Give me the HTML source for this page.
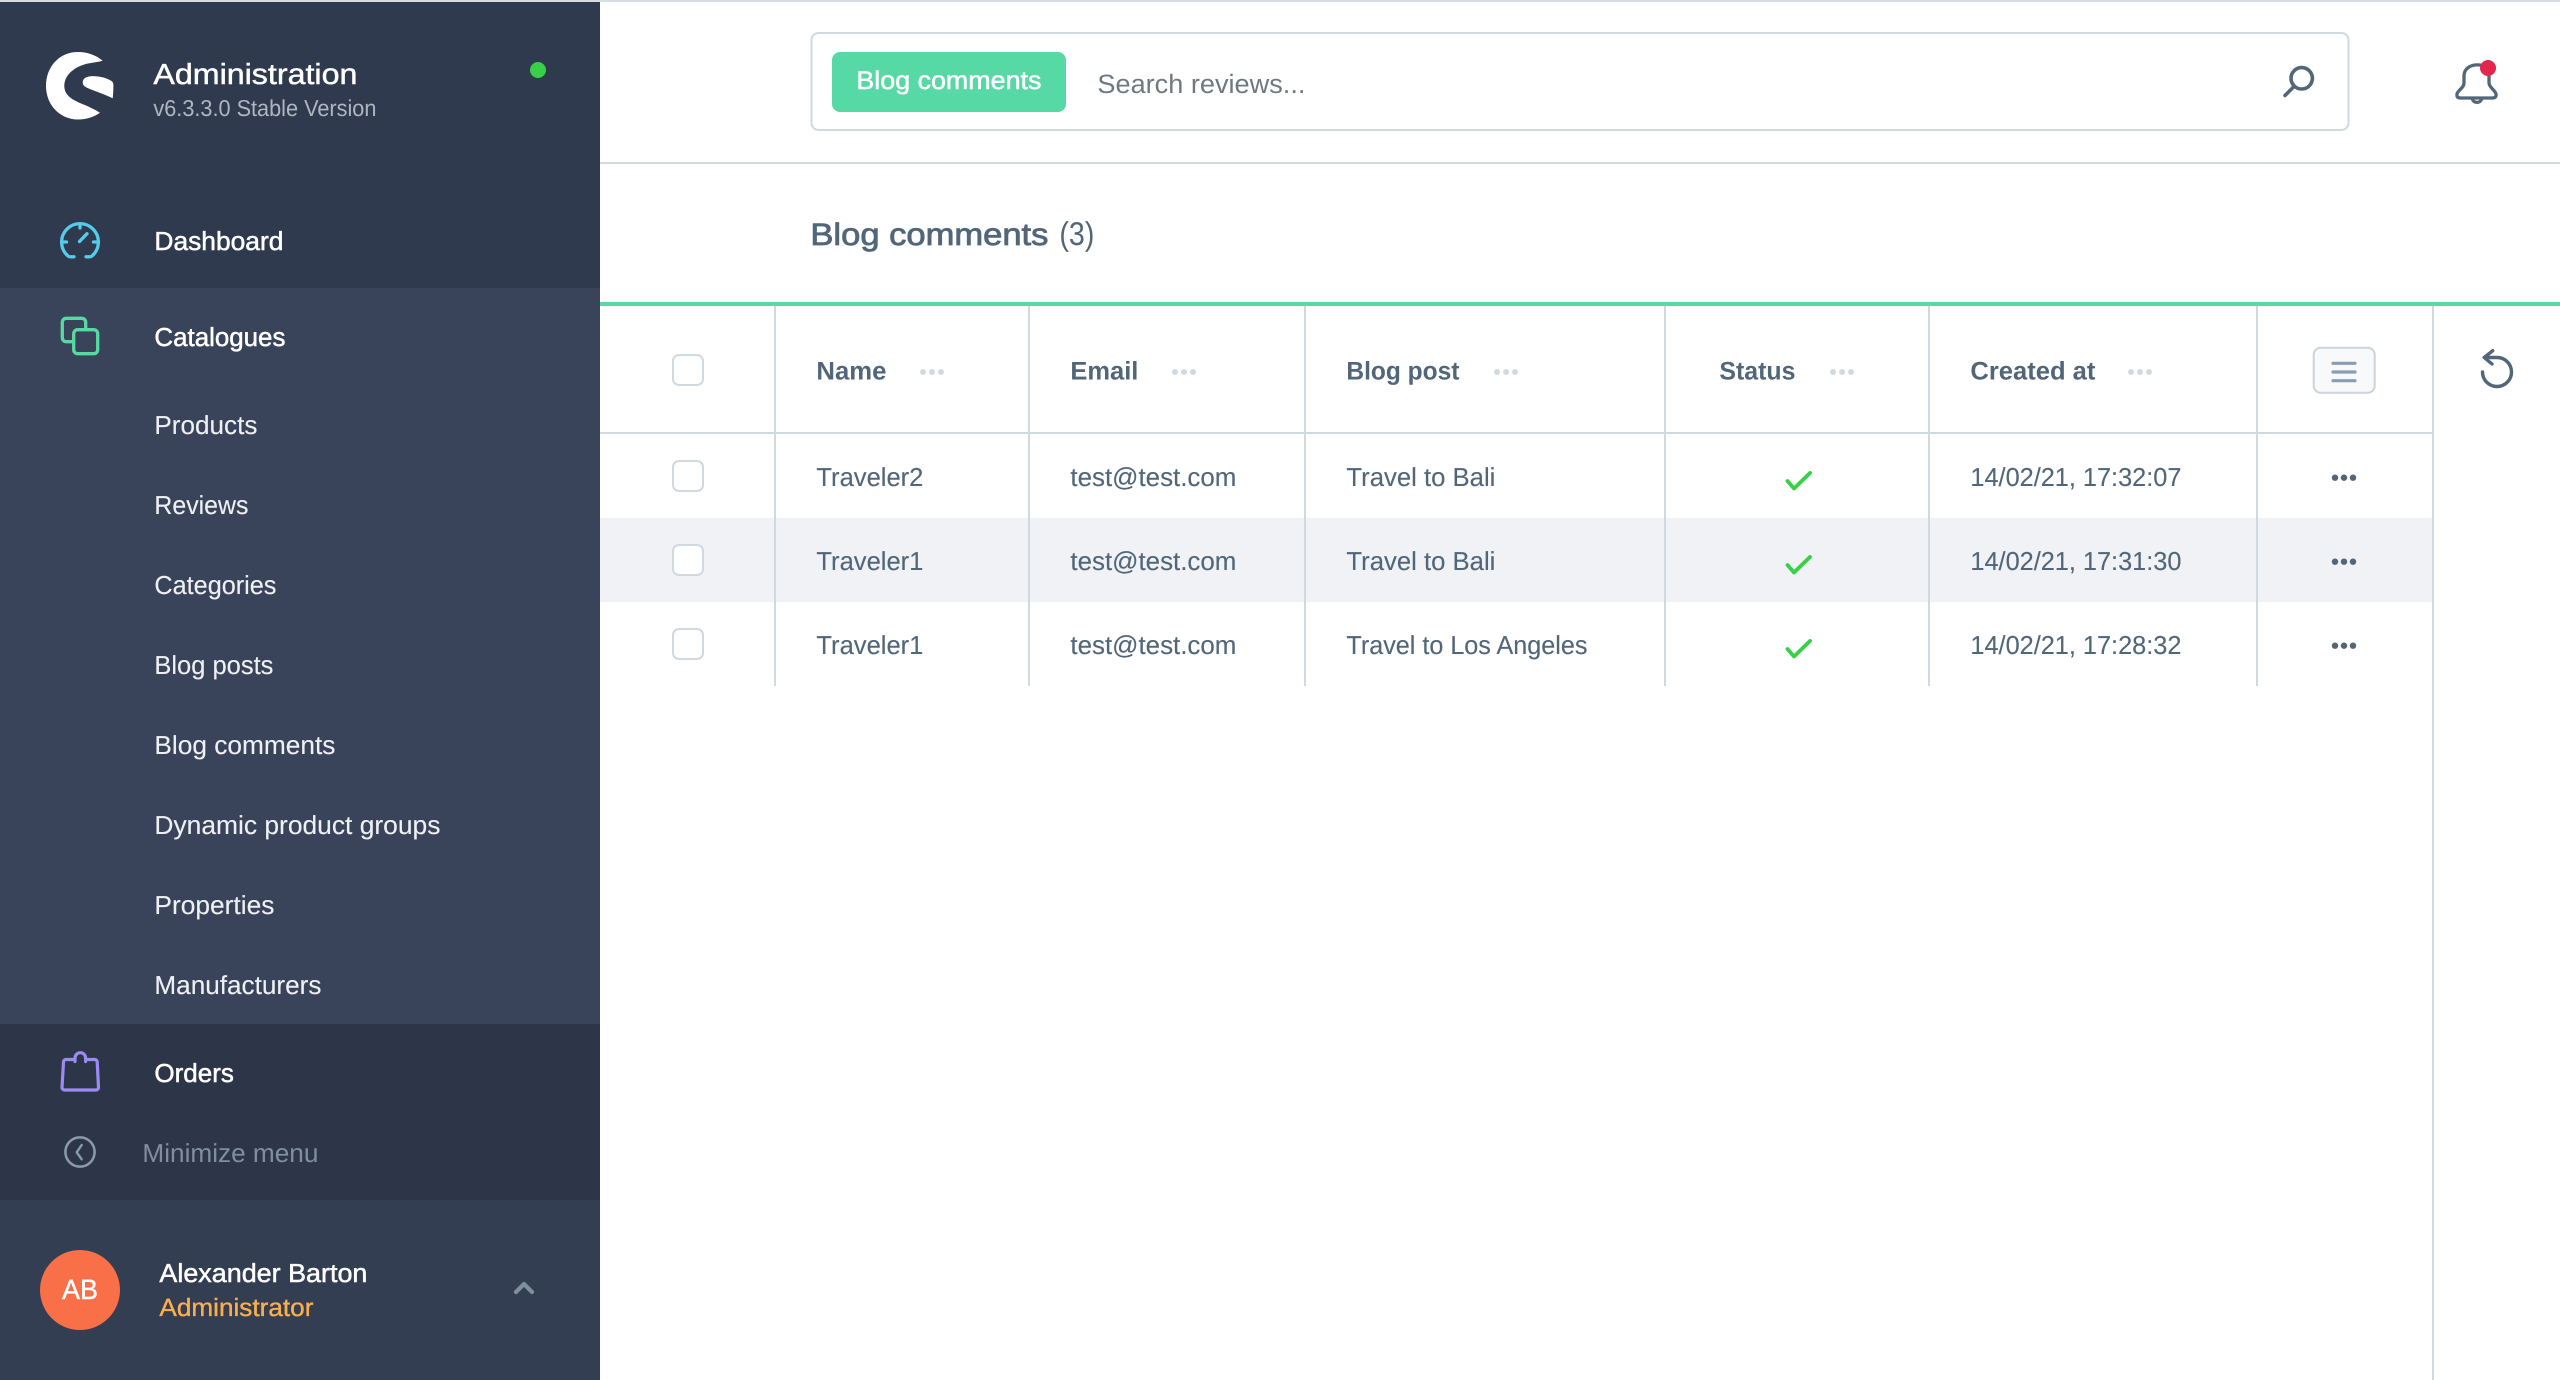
<!DOCTYPE html>
<html lang="en"><head><meta charset="utf-8"><title>Blog comments</title>
<style>
html,body{margin:0;padding:0;background:#fff;width:2560px;height:1380px;overflow:hidden}
svg{display:block}
text{font-family:"Liberation Sans",sans-serif;text-rendering:geometricPrecision;transform:translateX(-.6px)}
.m{font-size:26px;fill:#fff;stroke:#fff;stroke-width:.5px}
.s{font-size:26px;fill:#eef1f4;stroke:#eef1f4;stroke-width:.12px}
.c{font-size:26px;fill:#52667a;stroke:#52667a;stroke-width:.12px}
.h{font-size:25.5px;fill:#52667a;font-weight:bold}
.ln{fill:#d1d9e0}
.cb{fill:#fff;stroke:#d1d9e0;stroke-width:2}
.ck{fill:none;stroke:#37d046;stroke-width:3.8;stroke-linecap:round;stroke-linejoin:round}
.hd{fill:#d1d9e0}.rd{fill:#52667a}
</style></head>
<body>
<svg xmlns="http://www.w3.org/2000/svg" width="2560" height="1380" viewBox="0 0 2560 1380">
<rect width="2560" height="1380" fill="#fff"/>
<rect width="2560" height="2" fill="#d8dce1"/>

<!-- Sidebar -->
<rect y="2" width="600" height="286" fill="#2f3a4f"/>
<rect y="288" width="600" height="736" fill="#39435a"/>
<rect y="1024" width="600" height="176" fill="#2d3649"/>
<rect y="1200" width="600" height="180" fill="#333e52"/>

<!-- Logo -->
<path fill="#fff" d="M102.7 60.7C96 55 87 52 78 52C59 52 46 67 46 86C46 105 60 119.5 78 119.5C86 119.5 94 117 100 112.7C92 108 86 105.5 80 103C72 99.5 64.3 95 64.3 86C64.3 74 76 66 88 63.5C93 62.5 98 62 102.7 60.7Z"/>
<path fill="#fff" d="M82.7 82C83 78 87 76.5 91 76.2C98 75.8 106 77.5 111.5 81C113 82 113.5 84 113.4 86C113.3 90 113.2 94 112.7 98.3C106 95 98 92 91 89.5C86 87.5 82.5 86 82.7 82Z"/>
<text x="154" y="84" font-size="29" fill="#fff" stroke="#fff" stroke-width=".45" textLength="204" lengthAdjust="spacingAndGlyphs">Administration</text>
<text x="154" y="116" font-size="23" fill="#aeb6c0" textLength="223" lengthAdjust="spacingAndGlyphs">v6.3.3.0 Stable Version</text>
<circle cx="538" cy="70" r="8" fill="#37d046"/>

<!-- Dashboard icon -->
<g fill="none" stroke="#57cbe9" stroke-width="3.3" stroke-linecap="round" stroke-linejoin="round">
<path d="M74 256.8H70.5Q69 256.8 68 256A18.4 18.4 0 1 1 92 256Q91 256.8 89.5 256.8H86"/>
<path d="M80 224V228M62 242H66.5M98 242H93.5M79.5 241.5L87 233.7"/>
</g>
<text class="m" x="155" y="250" textLength="129" lengthAdjust="spacingAndGlyphs">Dashboard</text>

<!-- Catalogues icon -->
<g stroke="#57d9a3" stroke-width="3.3">
<rect x="62.3" y="318.3" width="23.4" height="23.4" rx="4" fill="none"/>
<rect x="73.7" y="329.7" width="24" height="24" rx="4" fill="#39435a"/>
</g>
<text class="m" x="155" y="346" textLength="131" lengthAdjust="spacingAndGlyphs">Catalogues</text>

<text class="s" x="155" y="434" textLength="103" lengthAdjust="spacingAndGlyphs">Products</text>
<text class="s" x="155" y="514" textLength="94" lengthAdjust="spacingAndGlyphs">Reviews</text>
<text class="s" x="155" y="594" textLength="122" lengthAdjust="spacingAndGlyphs">Categories</text>
<text class="s" x="155" y="674" textLength="119" lengthAdjust="spacingAndGlyphs">Blog posts</text>
<text class="s" x="155" y="754" textLength="181" lengthAdjust="spacingAndGlyphs">Blog comments</text>
<text class="s" x="155" y="834" textLength="286" lengthAdjust="spacingAndGlyphs">Dynamic product groups</text>
<text class="s" x="155" y="914" textLength="120" lengthAdjust="spacingAndGlyphs">Properties</text>
<text class="s" x="155" y="994" textLength="167" lengthAdjust="spacingAndGlyphs">Manufacturers</text>

<!-- Orders icon -->
<path fill="none" stroke="#9a8cf0" stroke-width="3.2" stroke-linecap="round" stroke-linejoin="round" d="M72.5 1059.5H66A2.5 2.5 0 0 0 63.5 1062L62 1087.5A2.5 2.5 0 0 0 64.5 1090H96A2.5 2.5 0 0 0 98.5 1087.5L97.2 1062A2.5 2.5 0 0 0 94.7 1059.5H88M75 1061.5V1058A5.3 5.3 0 0 1 85.6 1058V1061.5"/>
<text class="m" x="155" y="1082" textLength="79.5" lengthAdjust="spacingAndGlyphs">Orders</text>

<!-- Minimize -->
<circle cx="80" cy="1152" r="14.6" fill="none" stroke="#8a9ca8" stroke-width="2.5"/>
<path d="M81.7 1145L76.7 1152.3L81.7 1159.3" fill="none" stroke="#8a9ca8" stroke-width="2.4" stroke-linecap="round" stroke-linejoin="round"/>
<text x="143" y="1162" font-size="26" fill="#7f8f9f" textLength="176" lengthAdjust="spacingAndGlyphs">Minimize menu</text>

<!-- User -->
<circle cx="80" cy="1290" r="40" fill="#f96f47"/>
<text x="62.6" y="1299" font-size="28" fill="#fff" stroke="#fff" stroke-width=".4" textLength="36" lengthAdjust="spacingAndGlyphs">AB</text>
<text class="m" x="160" y="1282" textLength="208" lengthAdjust="spacingAndGlyphs">Alexander Barton</text>
<text x="160" y="1316" font-size="25" fill="#fcae4c" stroke="#fcae4c" stroke-width=".35" textLength="154" lengthAdjust="spacingAndGlyphs">Administrator</text>
<path d="M516 1292L524 1284L532 1292" fill="none" stroke="#7f8f9f" stroke-width="4.2" stroke-linecap="round" stroke-linejoin="round"/>

<!-- Top bar -->
<rect class="ln" x="600" y="162" width="1960" height="2"/>
<rect x="811.5" y="33" width="1537" height="97" rx="7" fill="#fff" stroke="#d1d9e0" stroke-width="2"/>
<rect x="832" y="52" width="234" height="60" rx="8" fill="#57d9a5"/>
<text x="857" y="89" font-size="25.5" fill="#fff" stroke="#fff" stroke-width=".5" textLength="185" lengthAdjust="spacingAndGlyphs">Blog comments</text>
<text x="1098" y="93" font-size="26.5" fill="#6f7880" textLength="208" lengthAdjust="spacingAndGlyphs">Search reviews...</text>
<g fill="none" stroke="#52667a" stroke-width="3.6" stroke-linecap="round">
<circle cx="2301.7" cy="78.3" r="10.7"/>
<path d="M2293.5 87L2285 95.5"/>
</g>
<!-- Bell -->
<g fill="none" stroke="#52667a" stroke-width="3.3" stroke-linecap="round" stroke-linejoin="round">
<path d="M2480 65C2470 64 2464 69 2464 76V83C2464 88 2458 90 2457 94C2456.5 97 2458 98 2461 98H2492C2495 98 2496.5 97 2496 94C2495 90 2489.5 88 2489 83V74"/>
<path d="M2472.5 99.5A4.7 4 0 0 0 2481.5 99.5"/>
</g>
<circle cx="2488" cy="68" r="8" fill="#e3264c"/>

<!-- Title -->
<text x="811" y="245" font-size="31" fill="#52667a" stroke="#52667a" stroke-width=".8" textLength="238" lengthAdjust="spacingAndGlyphs">Blog comments</text>
<text x="1060" y="245" font-size="33" fill="#52667a" textLength="35" lengthAdjust="spacingAndGlyphs">(3)</text>

<rect x="600" y="302" width="1960" height="4" fill="#57d9a3"/>

<!-- Table bg -->
<rect x="600" y="518" width="1833" height="84" fill="#f0f2f5"/>
<rect class="ln" x="600" y="432" width="1833" height="2"/>
<rect class="ln" x="774" y="306" width="2" height="380"/>
<rect class="ln" x="1028" y="306" width="2" height="380"/>
<rect class="ln" x="1304" y="306" width="2" height="380"/>
<rect class="ln" x="1664" y="306" width="2" height="380"/>
<rect class="ln" x="1928" y="306" width="2" height="380"/>
<rect class="ln" x="2256" y="306" width="2" height="380"/>
<rect class="ln" x="2432" y="306" width="2" height="1074"/>

<!-- Checkboxes -->
<rect class="cb" x="673" y="355" width="30" height="30" rx="6"/>
<rect class="cb" x="673" y="461" width="30" height="30" rx="6"/>
<rect class="cb" x="673" y="545" width="30" height="30" rx="6"/>
<rect class="cb" x="673" y="629" width="30" height="30" rx="6"/>

<!-- Header -->
<text class="h" x="817" y="379.5" textLength="70" lengthAdjust="spacingAndGlyphs">Name</text>
<text class="h" x="1071" y="379.5" textLength="68" lengthAdjust="spacingAndGlyphs">Email</text>
<text class="h" x="1347" y="379.5" textLength="113" lengthAdjust="spacingAndGlyphs">Blog post</text>
<text class="h" x="1720" y="379.5" textLength="76" lengthAdjust="spacingAndGlyphs">Status</text>
<text class="h" x="1971" y="379.5" textLength="125" lengthAdjust="spacingAndGlyphs">Created at</text>

<g class="hd">
<circle cx="923" cy="372" r="3"/><circle cx="932" cy="372" r="3"/><circle cx="941" cy="372" r="3"/>
<circle cx="1175" cy="372" r="3"/><circle cx="1184" cy="372" r="3"/><circle cx="1193" cy="372" r="3"/>
<circle cx="1497" cy="372" r="3"/><circle cx="1506" cy="372" r="3"/><circle cx="1515" cy="372" r="3"/>
<circle cx="1833" cy="372" r="3"/><circle cx="1842" cy="372" r="3"/><circle cx="1851" cy="372" r="3"/>
<circle cx="2131" cy="372" r="3"/><circle cx="2140" cy="372" r="3"/><circle cx="2149" cy="372" r="3"/>
</g>

<!-- Column settings button -->
<rect x="2313.7" y="347.7" width="61" height="45" rx="7" fill="#f7f9fa" stroke="#cbd3db" stroke-width="2"/>
<path d="M2333 363.3H2355M2333 372H2355M2333 380.7H2355" stroke="#8a9eb2" stroke-width="3.2" stroke-linecap="round" fill="none"/>

<!-- Reload -->
<g fill="none" stroke="#52667a" stroke-width="3.4" stroke-linecap="round" stroke-linejoin="round">
<path d="M2484.5 357.5H2497A14.5 14.5 0 1 1 2482.5 372"/>
<path d="M2492.7 350.7L2484.2 357.5L2492 364"/>
</g>

<!-- Row 1 -->
<text class="c" x="817" y="486" textLength="107" lengthAdjust="spacingAndGlyphs">Traveler2</text>
<text class="c" x="1071" y="486" textLength="166" lengthAdjust="spacingAndGlyphs">test@test.com</text>
<text class="c" x="1347" y="486" textLength="149" lengthAdjust="spacingAndGlyphs">Travel to Bali</text>
<path class="ck" d="M1787.5 481L1794 488.5L1810 473"/>
<text class="c" x="1971" y="486" textLength="211" lengthAdjust="spacingAndGlyphs">14/02/21, 17:32:07</text>
<g class="rd"><circle cx="2335" cy="477.7" r="3.2"/><circle cx="2344" cy="477.7" r="3.2"/><circle cx="2353" cy="477.7" r="3.2"/></g>

<!-- Row 2 -->
<text class="c" x="817" y="570" textLength="107" lengthAdjust="spacingAndGlyphs">Traveler1</text>
<text class="c" x="1071" y="570" textLength="166" lengthAdjust="spacingAndGlyphs">test@test.com</text>
<text class="c" x="1347" y="570" textLength="149" lengthAdjust="spacingAndGlyphs">Travel to Bali</text>
<path class="ck" d="M1787.5 565L1794 572.5L1810 557"/>
<text class="c" x="1971" y="570" textLength="211" lengthAdjust="spacingAndGlyphs">14/02/21, 17:31:30</text>
<g class="rd"><circle cx="2335" cy="561.7" r="3.2"/><circle cx="2344" cy="561.7" r="3.2"/><circle cx="2353" cy="561.7" r="3.2"/></g>

<!-- Row 3 -->
<text class="c" x="817" y="654" textLength="107" lengthAdjust="spacingAndGlyphs">Traveler1</text>
<text class="c" x="1071" y="654" textLength="166" lengthAdjust="spacingAndGlyphs">test@test.com</text>
<text class="c" x="1347" y="654" textLength="241" lengthAdjust="spacingAndGlyphs">Travel to Los Angeles</text>
<path class="ck" d="M1787.5 649L1794 656.5L1810 641"/>
<text class="c" x="1971" y="654" textLength="211" lengthAdjust="spacingAndGlyphs">14/02/21, 17:28:32</text>
<g class="rd"><circle cx="2335" cy="645.7" r="3.2"/><circle cx="2344" cy="645.7" r="3.2"/><circle cx="2353" cy="645.7" r="3.2"/></g>
</svg>
</body></html>
